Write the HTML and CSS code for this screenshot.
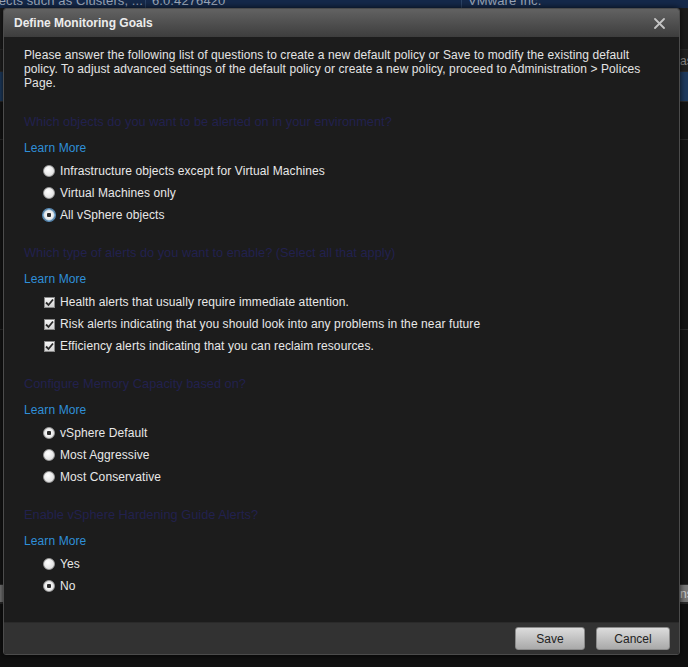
FILE: index.html
```html
<!DOCTYPE html>
<html lang="en">
<head>
    <meta charset="UTF-8">
    <meta name="viewport" content="width=device-width, initial-scale=1.0">
    <title>Define Monitoring Goals</title>
    <link rel="stylesheet" href="styles.css">
</head>
<body>
    <!-- page behind the dialog -->
    <div class="backdrop">
        <div class="bg-row bg-head">
            <span class="bg-cell c1"><span>vSphere objects such as Clusters, ...</span></span>
            <span class="bg-cell c2"><span>6.0.4276420</span></span>
            <span class="bg-cell c3"><span>VMware Inc.</span></span>
        </div>
        <div class="bg-row bg-tool"></div>
        <div class="bg-row bg-text"><span class="bg-edge">as</span></div>
        <div class="bg-row bg-sel"></div>
        <div class="bg-row bg-dark"></div>
        <div class="bg-row bg-dark tall"></div>
        <div class="bg-row bg-dark mid"></div>
        <div class="bg-row bg-btn"><span class="bg-edge">ns</span></div>
        <div class="bg-row bg-foot"></div>
    </div>

    <div class="modal">
        <div class="modal-title">
            <span>Define Monitoring Goals</span>
            <button class="close" title="Close">
                <svg width="11" height="11" viewBox="0 0 11 11">
                    <path d="M1 1 L10 10 M10 1 L1 10" stroke="#c4c4c4" stroke-width="1.8" stroke-linecap="round"/>
                </svg>
            </button>
        </div>

        <div class="modal-body">
            <p class="intro">Please answer the following list of questions to create a new default policy or Save to modify the existing default policy. To adjust advanced settings of the default policy or create a new policy, proceed to Administration &gt; Polices Page.</p>

            <div class="question">
                <h4>Which objects do you want to be alerted on in your environment?</h4>
                <a class="learn" href="#">Learn More</a>
                <div class="options">
                    <label class="opt"><input type="radio" name="objects"> Infrastructure objects except for Virtual Machines</label>
                    <label class="opt"><input type="radio" name="objects"> Virtual Machines only</label>
                    <label class="opt"><input type="radio" name="objects" class="focus" checked> All vSphere objects</label>
                </div>
            </div>

            <div class="question">
                <h4>Which type of alerts do you want to enable? (Select all that apply)</h4>
                <a class="learn" href="#">Learn More</a>
                <div class="options">
                    <label class="opt"><span class="check"><svg width="9" height="9" viewBox="0 0 9 9"><path d="M1 4.5 L3.5 7 L8 1.5" fill="none" stroke="#2a2a2a" stroke-width="1.8"/></svg></span> Health alerts that usually require immediate attention.</label>
                    <label class="opt"><span class="check"><svg width="9" height="9" viewBox="0 0 9 9"><path d="M1 4.5 L3.5 7 L8 1.5" fill="none" stroke="#2a2a2a" stroke-width="1.8"/></svg></span> Risk alerts indicating that you should look into any problems in the near future</label>
                    <label class="opt"><span class="check"><svg width="9" height="9" viewBox="0 0 9 9"><path d="M1 4.5 L3.5 7 L8 1.5" fill="none" stroke="#2a2a2a" stroke-width="1.8"/></svg></span> Efficiency alerts indicating that you can reclaim resources.</label>
                </div>
            </div>

            <div class="question">
                <h4>Configure Memory Capacity based on?</h4>
                <a class="learn" href="#">Learn More</a>
                <div class="options">
                    <label class="opt"><input type="radio" name="memory" checked> vSphere Default</label>
                    <label class="opt"><input type="radio" name="memory"> Most Aggressive</label>
                    <label class="opt"><input type="radio" name="memory"> Most Conservative</label>
                </div>
            </div>

            <div class="question">
                <h4>Enable vSphere Hardening Guide Alerts?</h4>
                <a class="learn" href="#">Learn More</a>
                <div class="options">
                    <label class="opt"><input type="radio" name="hardening"> Yes</label>
                    <label class="opt"><input type="radio" name="hardening" checked> No</label>
                </div>
            </div>
        </div>

        <div class="modal-footer">
            <button class="btn">Save</button>
            <button class="btn cancel">Cancel</button>
        </div>
    </div>
</body>
</html>
```

FILE: styles.css
```css
* {
    margin: 0;
    padding: 0;
    box-sizing: border-box;
}

body {
    font-family: "Liberation Sans", Arial, sans-serif;
    font-size: 12px;
    letter-spacing: 0.1px;
    background: #101010;
    color: #e0e0e0;
    width: 688px;
    height: 667px;
    overflow: hidden;
    position: relative;
}

/* ---- page behind the dialog ---- */

.backdrop {
    display: flex;
    flex-direction: column;
}

.bg-row {
    border-bottom: 1px solid #2a2a2a;
}

.bg-head {
    height: 8px;
    background: #15294a;
    display: flex;
    align-items: flex-end;
    overflow: hidden;
    color: #9aa6b8;
    font-size: 13px;
    line-height: 14px;
    border-bottom: none;
}

.bg-cell {
    display: flex;
    flex: none;
    white-space: nowrap;
    overflow: hidden;
}

.bg-cell span {
    flex: none;
}

.bg-cell.c1 { width: 146px; justify-content: flex-end; padding-right: 2px; border-right: 1px solid #2c4466; }
.bg-cell.c2 { width: 316px; padding-left: 6px; border-right: 1px solid #2c4466; }
.bg-cell.c3 { width: 226px; padding-left: 6px; }

.bg-tool {
    height: 42px;
    background: #1b1b1b;
}

.bg-text {
    height: 22px;
    background: #202020;
    display: flex;
    justify-content: flex-end;
    align-items: center;
}

.bg-edge {
    color: #8a8a8a;
    font-size: 12px;
    width: 8px;
    overflow: hidden;
}

.bg-sel {
    height: 30px;
    background: #1d3a5e;
}

.bg-dark {
    height: 38px;
    background: #141414;
}

.bg-dark.tall {
    height: 190px;
}

.bg-dark.mid {
    height: 255px;
}

.bg-btn {
    height: 18px;
    background: #787878;
    display: flex;
    justify-content: flex-end;
    align-items: center;
}

.bg-btn .bg-edge {
    color: #d0d0d0;
}

.bg-foot {
    flex: 1;
    height: 70px;
    background: #0f0f0f;
}

/* ---- dialog ---- */

.modal {
    position: absolute;
    left: 3px;
    top: 8px;
    width: 677px;
    height: 647px;
    background: #1c1c1c;
    border: 1px solid #4c4c4c;
    border-radius: 3px;
    box-shadow: 0 0 6px rgba(0, 0, 0, 0.8);
    display: flex;
    flex-direction: column;
    overflow: hidden;
}

.modal-title {
    height: 28px;
    flex: none;
    background: linear-gradient(#626262, #3d3d3d);
    display: flex;
    align-items: center;
    justify-content: space-between;
    padding: 0 14px 0 10px;
    font-weight: bold;
    letter-spacing: 0;
    color: #ececec;
}

.close {
    background: none;
    border: none;
    cursor: pointer;
    display: flex;
    padding-top: 1px;
}

.modal-body {
    height: 585px;
    flex: none;
    padding: 11px 20px 0 20px;
    display: flex;
    flex-direction: column;
    gap: 19px;
}

.intro {
    max-width: 625px;
    line-height: 14px;
    color: #e4e4e4;
    margin-bottom: 5px;
}

.question {
    display: flex;
    flex-direction: column;
}

.question h4 {
    font-weight: normal;
    font-size: 12.8px;
    letter-spacing: 0;
    line-height: 16px;
    color: #22214e;
    margin-bottom: 11px;
}

.learn {
    color: #2f8fd8;
    text-decoration: none;
    line-height: 14px;
    margin-bottom: 5px;
    align-self: flex-start;
}

.options {
    display: flex;
    flex-direction: column;
    padding-left: 19px;
}

.opt {
    height: 22px;
    display: flex;
    align-items: center;
    gap: 5px;
    color: #e8e8e8;
    cursor: pointer;
}

.opt input[type="radio"] {
    appearance: none;
    width: 12px;
    height: 12px;
    border-radius: 50%;
    border: 1px solid #9a9a9a;
    background: radial-gradient(circle at 40% 35%, #ffffff, #d6d6d6);
    flex: none;
}

.opt input[type="radio"]:checked {
    background: radial-gradient(circle, #2a2a2a 0 2px, #f4f4f4 2.5px, #d6d6d6);
}

.opt input.focus:checked {
    border-color: #8fc0e6;
    box-shadow: 0 0 0 1px #5a8fbd;
}

.check {
    width: 11px;
    height: 11px;
    margin-left: 1px;
    border: 1px solid #8a8a8a;
    background: linear-gradient(#f6f6f6, #d4d4d4);
    display: flex;
    align-items: center;
    justify-content: center;
    flex: none;
}

.modal-footer {
    flex: 1;
    background: #323232;
    border-top: 1px solid #2a2a2a;
    display: flex;
    justify-content: flex-end;
    align-items: flex-start;
    gap: 11px;
    padding: 4px 9px 0 0;
}

.btn {
    width: 70px;
    height: 23px;
    font-family: "Liberation Sans", Arial, sans-serif;
    font-size: 12px;
    color: #222;
    background: linear-gradient(#dcdcdc, #a9a9a9);
    border: 1px solid #8a8a8a;
    border-radius: 3px;
    cursor: pointer;
}

.btn.cancel {
    width: 74px;
}
```
